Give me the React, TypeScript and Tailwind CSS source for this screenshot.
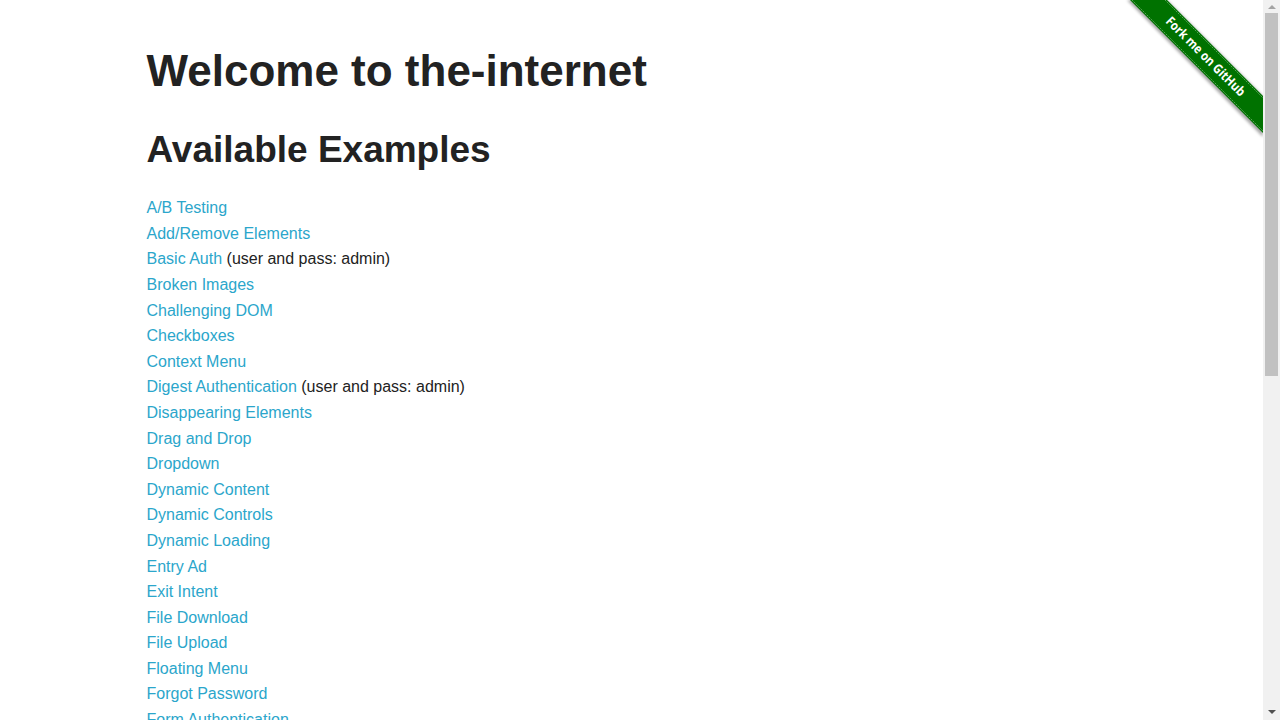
import React from 'react';

const examples: { label: string; note?: string }[] = [
  { label: 'A/B Testing' },
  { label: 'Add/Remove Elements' },
  { label: 'Basic Auth', note: '(user and pass: admin)' },
  { label: 'Broken Images' },
  { label: 'Challenging DOM' },
  { label: 'Checkboxes' },
  { label: 'Context Menu' },
  { label: 'Digest Authentication', note: '(user and pass: admin)' },
  { label: 'Disappearing Elements' },
  { label: 'Drag and Drop' },
  { label: 'Dropdown' },
  { label: 'Dynamic Content' },
  { label: 'Dynamic Controls' },
  { label: 'Dynamic Loading' },
  { label: 'Entry Ad' },
  { label: 'Exit Intent' },
  { label: 'File Download' },
  { label: 'File Upload' },
  { label: 'Floating Menu' },
  { label: 'Forgot Password' },
  { label: 'Form Authentication' },
  { label: 'Frames' },
  { label: 'Geolocation' },
  { label: 'Horizontal Slider' },
  { label: 'Hovers' },
  { label: 'Infinite Scroll' },
  { label: 'Inputs' },
  { label: 'JQuery UI Menus' },
  { label: 'JavaScript Alerts' },
  { label: 'JavaScript onload event error' },
  { label: 'Key Presses' },
  { label: 'Large & Deep DOM' },
  { label: 'Multiple Windows' },
  { label: 'Nested Frames' },
  { label: 'Notification Messages' },
  { label: 'Redirect Link' },
  { label: 'Secure File Download' },
  { label: 'Shadow DOM' },
  { label: 'Shifting Content' },
  { label: 'Slow Resources' },
  { label: 'Sortable Data Tables' },
  { label: 'Status Codes' },
  { label: 'Typos' },
  { label: 'WYSIWYG Editor' },
];

// the green "Fork me on GitHub" corner ribbon
const ForkRibbon = () => (
  <svg width="149" height="149" viewBox="0 0 149 149" className="absolute top-0 right-0">
    <defs>
      <filter id="rshadow" x="-20%" y="-20%" width="140%" height="140%">
        <feGaussianBlur stdDeviation="1.6" />
      </filter>
    </defs>
    <polygon points="13,0 53,0 149,96 149,137" fill="#000" opacity="0.35" filter="url(#rshadow)" />
    <polygon points="16,0 53,0 149,96 149,133" fill="#007200" />
    <line x1="51" y1="0" x2="149" y2="98" stroke="#6fae6f" strokeWidth="0.8" strokeDasharray="2 1" />
    <line x1="18" y1="0" x2="149" y2="131" stroke="#6fae6f" strokeWidth="0.8" strokeDasharray="2 1" />
    <text
      x="92"
      y="56"
      transform="rotate(45 92 56)"
      textAnchor="middle"
      dominantBaseline="central"
      fill="#ffffff"
      fontSize="13"
      fontWeight="bold"
      fontFamily="'Open Sans', 'Liberation Sans', sans-serif"
      textLength="106"
      lengthAdjust="spacingAndGlyphs"
    >
      Fork me on GitHub
    </text>
  </svg>
);

const Scrollbar = () => (
  <div className="w-[17px] h-full bg-[#f1f1f1] flex flex-col items-center shrink-0">
    <div className="h-[13px] flex items-center justify-center">
      <div className="w-0 h-0 border-l-[4px] border-r-[4px] border-b-[4px] border-l-transparent border-r-transparent border-b-[#a3a3a3]" />
    </div>
    <div className="w-[13px] h-[363px] bg-[#c1c1c1]" />
    <div className="flex-1" />
    <div className="h-[17px] flex items-center justify-center">
      <div className="w-0 h-0 border-l-[4px] border-r-[4px] border-t-[4px] border-l-transparent border-r-transparent border-t-[#505050]" />
    </div>
  </div>
);

export default function App() {
  return (
    <div className="flex h-screen w-full overflow-hidden bg-white font-['Liberation_Sans',Arial,sans-serif] text-[#222222]">
      <div className="relative flex-1 overflow-hidden">
        <div className="max-w-[1000px] mx-auto px-[15px]">
          <h1 className="mt-[45px] text-[44px] leading-[52.8px] font-bold">Welcome to the-internet</h1>
          <h2 className="mt-[30px] text-[37px] leading-[44.4px] font-bold">Available Examples</h2>
          <ul className="mt-[23px] text-[16px] leading-[25.6px]">
            {examples.map((ex) => (
              <li key={ex.label}>
                <a href="#" className="text-[#2ba6cb]">{ex.label}</a>
                {ex.note && <span> {ex.note}</span>}
              </li>
            ))}
          </ul>
          <hr className="mt-[20px] border-[#dddddd]" />
          <div className="py-[12px] text-center text-[16px]">
            Powered by <a href="#" className="text-[#2ba6cb]">Elemental Selenium</a>
          </div>
        </div>
        <ForkRibbon />
      </div>
      <Scrollbar />
    </div>
  );
}
